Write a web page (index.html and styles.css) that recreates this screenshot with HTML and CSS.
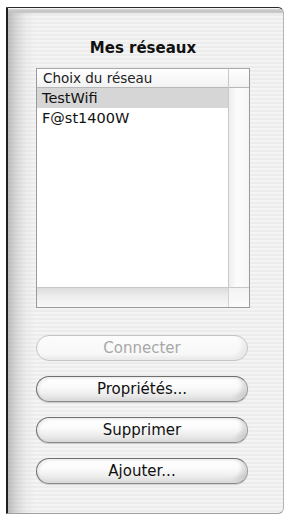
FILE: index.html
```html
<!DOCTYPE html>
<html lang="fr">
<head>
<meta charset="utf-8">
<title>Mes réseaux</title>
<link rel="stylesheet" href="styles.css">
</head>
<body>
<div class="drawer">
  <h1 class="title">Mes réseaux</h1>
  <div class="table">
    <div class="table-main">
      <div class="table-body">
        <div class="header"><span class="header-cell">Choix du réseau</span></div>
        <div class="rows">
          <div class="row selected">TestWifi</div>
          <div class="row">F@st1400W</div>
        </div>
      </div>
      <div class="vscroll">
        <div class="vscroll-head"></div>
        <div class="vscroll-track"></div>
      </div>
    </div>
    <div class="hscroll">
      <div class="hscroll-track"></div>
      <div class="corner"></div>
    </div>
  </div>
  <div class="buttons">
    <button class="btn" disabled>Connecter</button>
    <button class="btn">Propriétés...</button>
    <button class="btn">Supprimer</button>
    <button class="btn">Ajouter...</button>
  </div>
</div>
</body>
</html>
```
FILE: styles.css
```css
html, body {
  margin: 0;
  padding: 0;
  background: #ffffff;
}
body {
  width: 290px;
  height: 520px;
  overflow: hidden;
  font-family: "DejaVu Sans", "Liberation Sans", sans-serif;
}
.drawer {
  box-sizing: border-box;
  margin: 7px 0 0 6px;
  width: 278px;
  height: 507px;
  border-left: 2px solid #1e1e1e;
  border-top: 1px solid #2a2a2a;
  border-right: 1px solid #b4b4b4;
  border-bottom: 1px solid #a0a0a0;
  border-top-right-radius: 6px;
  border-bottom-right-radius: 6px;
  background:
    linear-gradient(to bottom, #f4f4f4 0, #f4f4f4 1px, #d4d4d4 1px, #c0c0c0 4px, rgba(230,230,230,0) 6px),
    linear-gradient(to right, rgba(150,150,150,0.6) 0, rgba(180,180,180,0.45) 8px, rgba(210,210,210,0.2) 18px, rgba(240,240,240,0) 27px),
    repeating-linear-gradient(to bottom, #f4f4f4 0, #f4f4f4 2px, #ececec 2px, #ececec 4px);
  padding: 32px 0 0 28px;
  display: flex;
  flex-direction: column;
}
.title {
  margin: 0 0 12px 0;
  width: 214px;
  text-align: center;
  font-size: 15px;
  font-weight: bold;
  line-height: 16px;
  color: #111;
}
.table {
  box-sizing: border-box;
  width: 214px;
  height: 240px;
  border: 1px solid #9a9a9a;
  border-top-color: #a8a8a8;
  display: flex;
  flex-direction: column;
  background: #fff;
}
.table-main {
  flex: 1;
  display: flex;
}
.table-body {
  flex: 1;
  display: flex;
  flex-direction: column;
}
.header {
  height: 19px;
  box-sizing: border-box;
  border-bottom: 1px solid #b8b8b8;
  background: linear-gradient(#ffffff, #f2f2f2);
  display: flex;
  align-items: center;
}
.header-cell {
  padding-left: 6px;
  font-size: 13.5px;
  color: #222;
  line-height: 18px;
}
.rows {
  flex: 1;
  background: #fff;
}
.row {
  height: 20px;
  line-height: 21px;
  padding-left: 5px;
  font-size: 14.5px;
  color: #111;
}
.row.selected {
  background: #d6d6d6;
}
.vscroll {
  width: 20px;
  display: flex;
  flex-direction: column;
  border-left: 1px solid #c8c8c8;
}
.vscroll-head {
  height: 19px;
  box-sizing: border-box;
  border-bottom: 1px solid #b8b8b8;
  background: linear-gradient(#ffffff, #f2f2f2);
}
.vscroll-track {
  flex: 1;
  background: linear-gradient(to right, #eeeeee, #fcfcfc 40%, #f6f6f6);
}
.hscroll {
  height: 19px;
  display: flex;
  border-top: 1px solid #c8c8c8;
}
.hscroll-track {
  flex: 1;
  background: linear-gradient(#dcdcdc, #ececec 40%, #f8f8f8);
}
.corner {
  width: 20px;
  border-left: 1px solid #d0d0d0;
  background: linear-gradient(#f2f2f2, #fcfcfc);
}
.buttons {
  margin-top: 27px;
  width: 212px;
  display: flex;
  flex-direction: column;
  gap: 15px;
}
.btn {
  box-sizing: border-box;
  height: 26px;
  width: 212px;
  border: 1px solid #6e6e6e;
  border-right-color: #9a9a9a;
  border-bottom-color: #8a8a8a;
  border-radius: 13px;
  background: linear-gradient(#ffffff 0, #fbfbfb 40%, #ececec 75%, #f6f6f6 100%);
  box-shadow: inset -5px -3px 4px rgba(0,0,0,0.13), inset 2px 2px 2px rgba(0,0,0,0.06), 0 1px 1px rgba(0,0,0,0.15);
  font-family: "DejaVu Sans", "Liberation Sans", sans-serif;
  font-size: 15px;
  color: #111;
  padding: 0;
  line-height: 24px;
  text-align: center;
}
.btn:disabled {
  border-color: #c4c4c4;
  color: #a8a8a8;
  box-shadow: inset -5px -3px 4px rgba(0,0,0,0.06);
  background: linear-gradient(#fcfcfc, #f6f6f6);
}
```
